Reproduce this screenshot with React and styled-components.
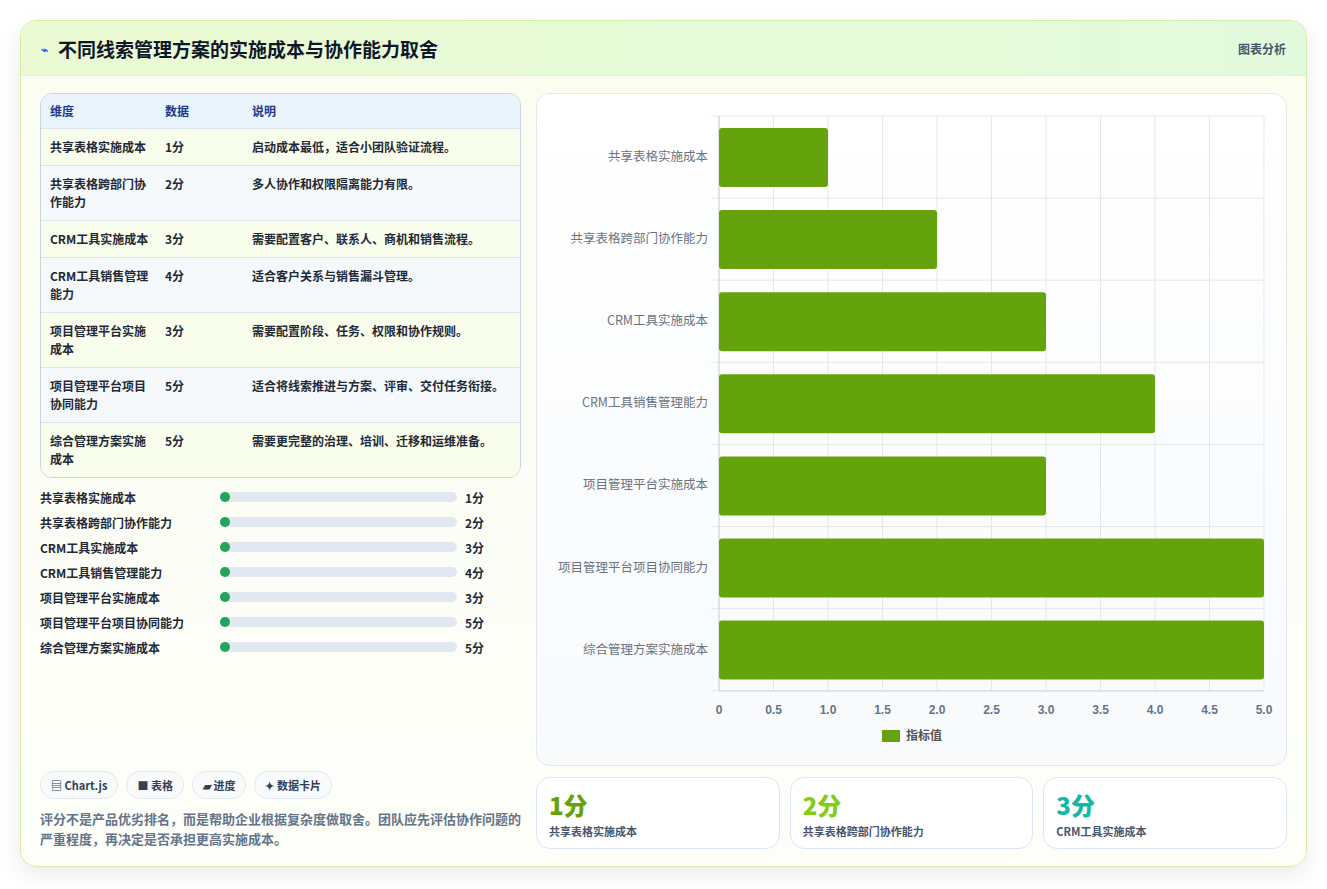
import React from "react";
import styled, { createGlobalStyle } from "styled-components";

const G = createGlobalStyle`
  body{margin:0;background:#fff;font-family:"Noto Sans CJK SC","Noto Sans",sans-serif;}
`;
const rows = [
  ["共享表格实施成本", 1, "启动成本最低，适合小团队验证流程。"],
  ["共享表格跨部门协作能力", 2, "多人协作和权限隔离能力有限。"],
  ["CRM工具实施成本", 3, "需要配置客户、联系人、商机和销售流程。"],
  ["CRM工具销售管理能力", 4, "适合客户关系与销售漏斗管理。"],
  ["项目管理平台实施成本", 3, "需要配置阶段、任务、权限和协作规则。"],
  ["项目管理平台项目协同能力", 5, "适合将线索推进与方案、评审、交付任务衔接。"],
  ["综合管理方案实施成本", 5, "需要更完整的治理、培训、迁移和运维准备。"],
];
const Page = styled.div`padding:20px 20px 22px 20px;`;
const Card = styled.div`
  border:1px solid #d4ecaa;border-radius:16px;overflow:hidden;height:845px;
  background:linear-gradient(180deg,#fbfdf1,#fdfef9);
  box-shadow:0 8px 24px rgba(0,0,0,.08);display:flex;flex-direction:column;
`;
const Header = styled.div`
  height:54px;display:flex;align-items:center;justify-content:space-between;
  padding:0 20px;border-bottom:1px solid #e6f0d4;
  background:linear-gradient(90deg,#ebfad2,#e2fadc);
`;
const Title = styled.h1`margin:0;font-size:19px;font-weight:700;color:#0f172a;display:flex;align-items:center;gap:10px;`;
const Tag = styled.span`font-size:12px;font-weight:700;color:#475569;`;
const Body = styled.div`flex:1;display:grid;grid-template-columns:481px 751px;gap:15px;padding:17px 19px 17px 19px;`;
const Left = styled.div`display:flex;flex-direction:column;`;
const Right = styled.div`display:flex;flex-direction:column;gap:11px;`;
const Table = styled.div`border:1px solid #cbd5e1;border-radius:12px;overflow:hidden;`;
const Row = styled.div`
  display:grid;grid-template-columns:115px 87px 1fr;padding:${p=>p.$h?"8px 9px":"9px 9px"};
  background:${p=>p.$h?"#eaf4fd":p.$alt?"#f5f9fb":"#f8fdec"};
  border-top:${p=>p.$h?"none":"1px solid #dbe4ec"};
  font-size:12px;font-weight:700;line-height:18px;color:${p=>p.$h?"#1e3a8a":"#1f2937"};
  & > span:first-child{padding-right:10px;}
`;
const Bars = styled.div`display:flex;flex-direction:column;gap:7px;margin-top:10px;`;
const BarRow = styled.div`display:grid;grid-template-columns:172px 237px 1fr;gap:0 8px;align-items:center;font-size:12px;font-weight:700;color:#1f2937;height:18px;`;
const Track = styled.div`height:10px;border-radius:5px;background:#e2e8f0;position:relative;margin-left:0;`;
const Dot = styled.div`position:absolute;left:0;top:0;width:10px;height:10px;border-radius:5px;background:#22a55a;`;
const Chips = styled.div`margin-top:auto;display:flex;gap:8px;`;
const Chip = styled.span`font-size:11px;font-weight:700;color:#334155;border:1px solid #e2e8f0;background:#f8fafc;border-radius:14px;padding:5px 10px;`;
const Note = styled.p`margin:10px 0 0;font-size:13px;line-height:20px;color:#64748b;font-weight:700;`;
const Panel = styled.div`height:671px;border:1px solid #e2e8f0;border-radius:14px;background:linear-gradient(180deg,#fff,#f8fafc);`;
const Stats = styled.div`display:grid;grid-template-columns:repeat(3,1fr);gap:10px;`;
const Stat = styled.div`border:1px solid #dbe6f3;border-radius:14px;background:#fff;height:72px;padding:12px 12px;box-sizing:border-box;`;
const Big = styled.div`font-size:24px;font-weight:800;color:${p=>p.$c};line-height:30px;`;
const Small = styled.div`font-size:11px;font-weight:700;color:#475569;margin-top:3px;`;

function Chart(){
  const x0=182,w=545,top=22,rh=82.1;
  return (
    <svg width="751" height="671" style={{display:"block"}}>
      {Array.from({length:11}).map((_,i)=>(
        <g key={i}>
          <line x1={x0+i*w/10} y1={top} x2={x0+i*w/10} y2={597} stroke="#e5e7eb"/>
          <text x={x0+i*w/10} y={620} textAnchor="middle" fontSize="12" fontWeight="700" fill="#64748b" fontFamily="Liberation Sans,sans-serif">{i===0?"0":(i/2).toFixed(1)}</text>
        </g>
      ))}
      {Array.from({length:8}).map((_,i)=>(
        <line key={i} x1={x0-8} x2={x0+w} y1={top+i*rh} y2={top+i*rh} stroke="#e5e7eb"/>
      ))}
      <line x1={x0} y1={top} x2={x0} y2={597} stroke="#cbd5e1"/>
      <line x1={x0} y1={597} x2={x0+w} y2={597} stroke="#cbd5e1"/>
      {rows.map((r,i)=>(
        <g key={i}>
          <rect x={x0} y={top+i*rh+12} width={r[1]*w/5} height={59} rx="3" fill="#65a30d"/>
          <text x={171} y={top+i*rh+45} textAnchor="end" fontSize="12.5" fill="#6b7280">{r[0]}</text>
        </g>
      ))}
      <rect x={345} y={636} width={18} height={12} fill="#65a30d"/>
      <text x={369} y={646} fontSize="12" fontWeight="700" fill="#555">指标值</text>
    </svg>
  );
}

export default function App(){
  return (<Page><G/>
    <Card>
      <Header><Title><span style={{fontSize:12,color:"#2563eb"}}>⌁</span>不同线索管理方案的实施成本与协作能力取舍</Title><Tag>图表分析</Tag></Header>
      <Body>
        <Left>
          <Table>
            <Row $h><span>维度</span><span>数据</span><span>说明</span></Row>
            {rows.map((r,i)=>(<Row key={i} $alt={i%2===1}><span>{r[0]}</span><span>{r[1]}分</span><span>{r[2]}</span></Row>))}
          </Table>
          <Bars>
            {rows.map((r,i)=>(<BarRow key={i}><span>{r[0]}</span><Track><Dot/></Track><span>{r[1]}分</span></BarRow>))}
          </Bars>
          <Chips><Chip>▤ Chart.js</Chip><Chip>■ 表格</Chip><Chip>▰ 进度</Chip><Chip>✦ 数据卡片</Chip></Chips>
          <Note>评分不是产品优劣排名，而是帮助企业根据复杂度做取舍。团队应先评估协作问题的严重程度，再决定是否承担更高实施成本。</Note>
        </Left>
        <Right>
          <Panel><Chart/></Panel>
          <Stats>
            <Stat><Big $c="#65a30d">1分</Big><Small>共享表格实施成本</Small></Stat>
            <Stat><Big $c="#84cc16">2分</Big><Small>共享表格跨部门协作能力</Small></Stat>
            <Stat><Big $c="#14b8a6">3分</Big><Small>CRM工具实施成本</Small></Stat>
          </Stats>
        </Right>
      </Body>
    </Card>
  </Page>);
}
